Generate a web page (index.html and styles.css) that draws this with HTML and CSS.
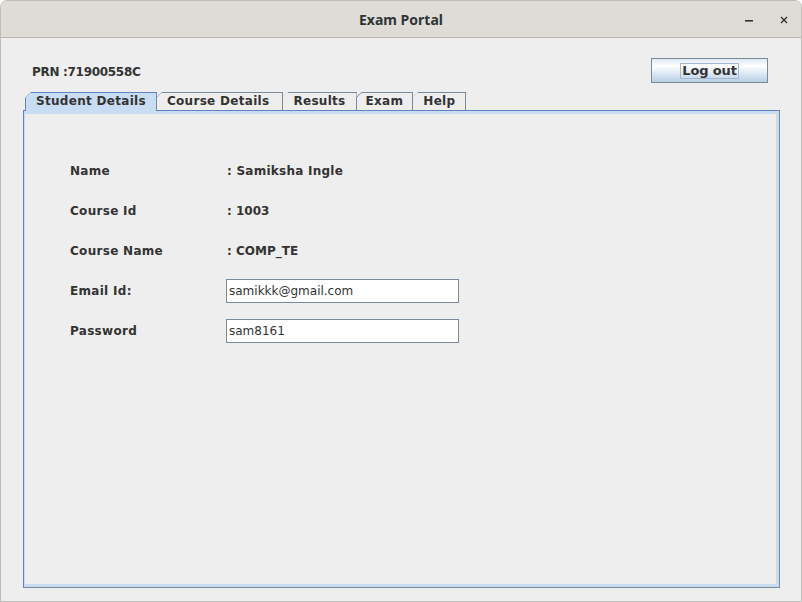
FILE: index.html
```html
<!DOCTYPE html>
<html lang="en">
<head>
<meta charset="utf-8">
<title>Exam Portal</title>
<link rel="stylesheet" href="styles.css">
</head>
<body>
<div class="window">
  <header class="titlebar">
    <span class="spacer"></span>
    <span class="title">Exam Portal</span>
    <div class="controls">
      <svg class="ctl" width="14" height="14" viewBox="0 0 14 14" aria-label="Minimize"><rect x="3" y="7" width="8" height="1.6" fill="#2e3436"/></svg>
      <svg class="ctl" width="14" height="14" viewBox="0 0 14 14" aria-label="Close"><path d="M4 4 L10 10 M10 4 L4 10" stroke="#2e3436" stroke-width="1.4"/></svg>
    </div>
  </header>
  <main class="content">
    <div class="topline">
      <span class="prn">PRN :71900558C</span>
      <button class="logout"><span class="focus">Log out</span></button>
    </div>
    <nav class="tabs">
      <span class="tab selected">Student Details</span>
      <span class="tab tab-course">Course Details</span>
      <span class="tab">Results</span>
      <span class="tab tab-exam">Exam</span>
      <span class="tab">Help</span>
    </nav>
    <section class="panel">
      <div class="panel-inner">
        <div class="form">
          <span class="label">Name</span><span class="value wide">: Samiksha Ingle</span>
          <span class="label">Course Id</span><span class="value">: 1003</span>
          <span class="label">Course Name</span><span class="value">: COMP_TE</span>
          <span class="label">Email Id:</span><input class="field" type="text" value="samikkk@gmail.com">
          <span class="label">Password</span><input class="field" type="text" value="sam8161">
        </div>
      </div>
    </section>
  </main>
</div>
</body>
</html>
```
FILE: styles.css
```css
* { box-sizing: border-box; }
html, body { margin: 0; padding: 0; background: #ffffff; }
body { width: 802px; height: 602px; overflow: hidden; font-family: "DejaVu Sans", sans-serif; }

.window {
  width: 802px;
  height: 602px;
  border: 1px solid #bdbdba;
  border-radius: 7px 7px 0 0;
  background: #eeeeee;
  display: flex;
  flex-direction: column;
  overflow: hidden;
}

.titlebar {
  height: 37px;
  flex: none;
  background: #dfdcd8;
  border-bottom: 1px solid #bab5ae;
  display: grid;
  grid-template-columns: 1fr auto 1fr;
  align-items: center;
}
.title {
  font-family: "Noto Sans", "DejaVu Sans", sans-serif;
  font-weight: 700;
  font-size: 14px;
  color: #2e3436;
  padding-top: 1px;
}
.controls {
  justify-self: end;
  display: flex;
  gap: 21px;
  padding-right: 10px;
  padding-top: 1px;
}
.ctl { display: block; }

.content {
  flex: 1;
  display: flex;
  flex-direction: column;
  padding: 20px 21px 13px 22px;
  color: #333333;
  font-size: 12px;
  font-weight: 700;
}

.topline {
  height: 25px;
  display: flex;
  justify-content: space-between;
  align-items: flex-start;
  padding: 0 12px 0 9px;
}
.prn { margin-top: 7px; font-size: 12px; letter-spacing: -0.3px; }

.logout {
  width: 117px;
  height: 25px;
  border: 1px solid #7a8a99;
  background: linear-gradient(#dde8f3 0%, #ffffff 30%, #e6eef7 55%, #b8cfe5 100%);
  display: flex;
  align-items: center;
  justify-content: center;
  padding: 0;
  font-family: "DejaVu Sans", sans-serif;
  font-weight: 700;
  font-size: 13px;
  letter-spacing: -0.15px;
  color: #333333;
}
.focus {
  border: 1px solid #a3b8cc;
  padding: 0 1px;
  line-height: 14px;
}

.tabs {
  margin-top: 9px;
  display: flex;
  align-items: flex-end;
  padding-left: 2px;
  margin-bottom: -1px;
  position: relative;
  z-index: 1;
}
.tab {
  height: 18px;
  margin-bottom: 1px;
  padding: 0 10px;
  margin-left: -1px;
  border: 1px solid #7a8a99;
  border-bottom: none;
  background: linear-gradient(135deg, transparent 0 3.4px, #7a8a99 3.4px 4.4px, #eeeeee 4.4px);
  background-origin: border-box;
  clip-path: polygon(6px 0, 100% 0, 100% 100%, 0 100%, 0 6px);
  font-size: 12px;
  letter-spacing: 0.3px;
  line-height: 17px;
  color: #333333;
}
.tab:first-child { margin-left: 0; }
.tab.tab-course { padding-right: 13px; }
.tab.tab-exam { padding: 0 9px; }
.tab.selected {
  height: 19px;
  margin-bottom: 0;
  border-color: #6382bf;
  background: linear-gradient(135deg, transparent 0 3.4px, #6382bf 3.4px 4.4px, #c8ddf2 4.4px);
  background-origin: border-box;
}

.panel {
  flex: 1;
  border: 1px solid #7a8a99;
  border-top-color: #6382bf;
  border-left-color: #6382bf;
}
.panel-inner {
  height: 100%;
  border-style: solid;
  border-color: #c8ddf2;
  border-width: 3px 3px 3px 1px;
  padding: 45px 0 0 45px;
}

.form {
  display: grid;
  grid-template-columns: 156px 233px;
  grid-auto-rows: 24px;
  row-gap: 16px;
  align-items: center;
}
.label { font-size: 12px; letter-spacing: 0.3px; }
.value { padding-left: 1px; font-size: 12px; }
.value.wide { letter-spacing: 0.25px; }
.field {
  height: 24px;
  width: 233px;
  border: 1px solid #7a8a99;
  background: #ffffff;
  padding: 0 2px;
  font-family: "DejaVu Sans", sans-serif;
  font-size: 12px;
  font-weight: 400;
  color: #333333;
  outline: none;
}
```
